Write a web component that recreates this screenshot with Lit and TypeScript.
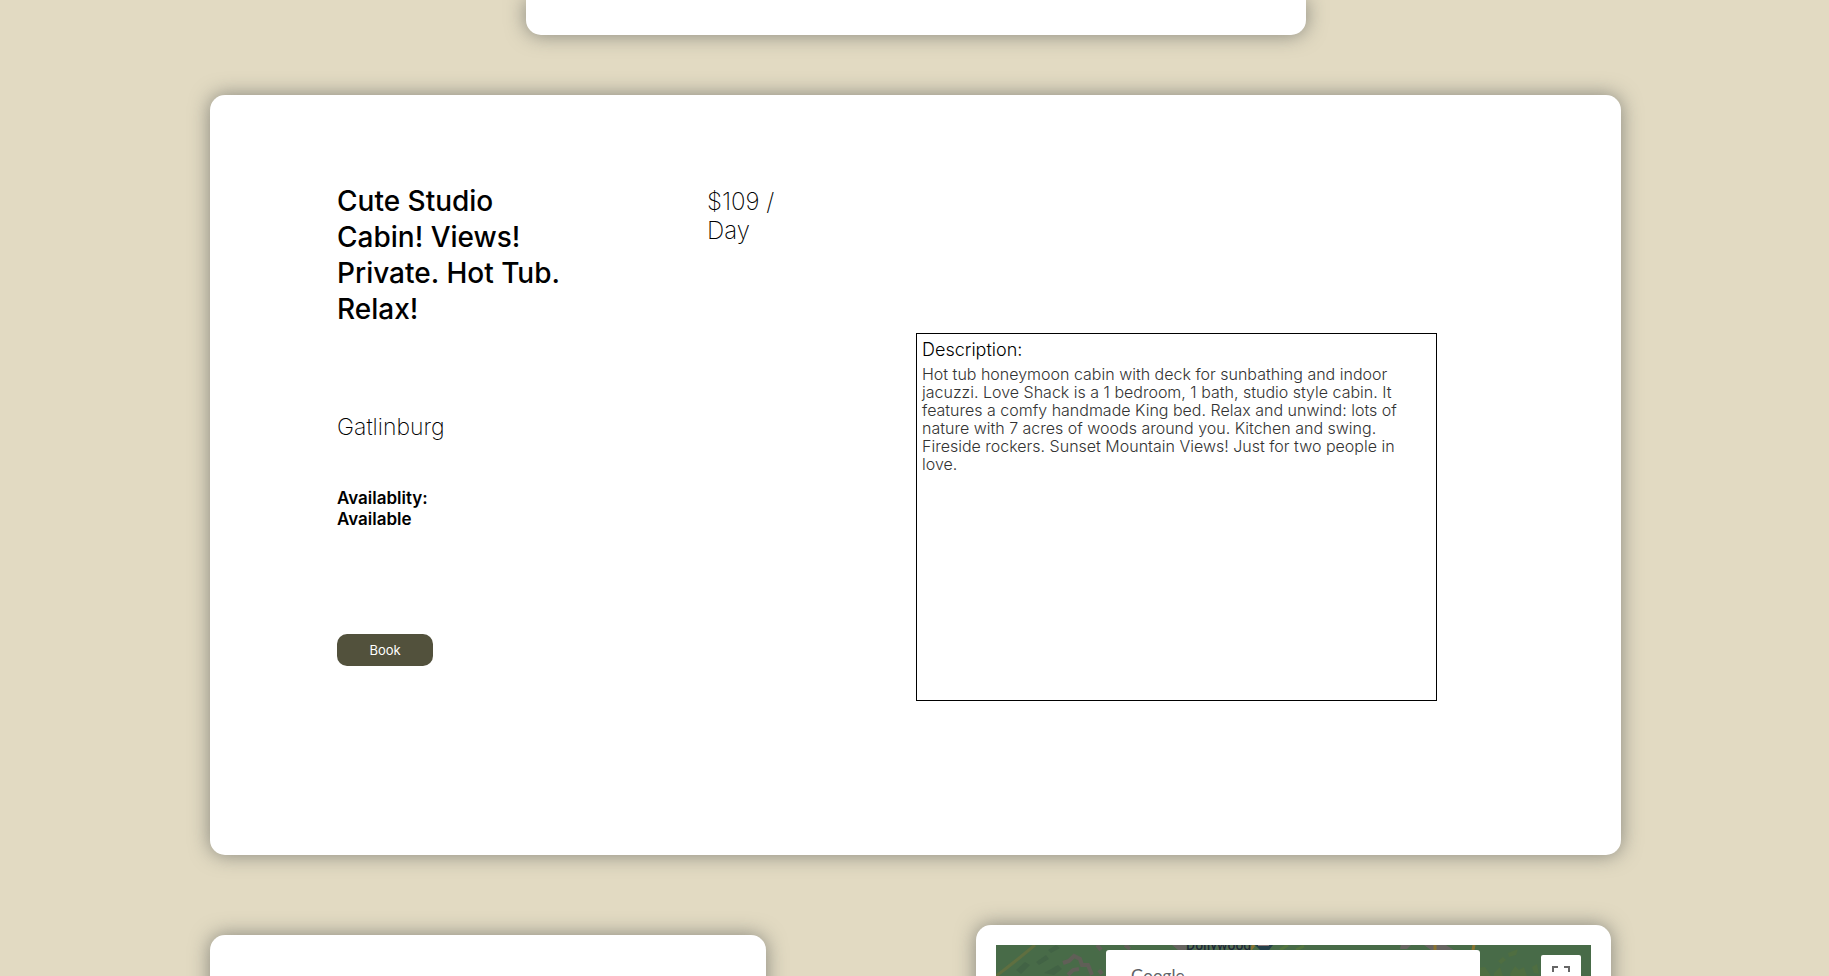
import { LitElement, html, css } from "lit";
import { customElement } from "lit/decorators.js";

@customElement("listing-card")
class ListingCard extends LitElement {
  static styles = css`
    :host { display: block; }
    .card {
      display: grid;
      grid-template-columns: 370fr 209fr 521fr;
      min-height: 760px;
      padding: 88px 184px 154px 127px;
      box-sizing: border-box;
      background: #fff;
      border-radius: 15px;
      box-shadow: 0 0 20px rgba(70, 75, 75, 0.6);
    }
    h1, h2, p { margin: 0; }
    .facts { display: flex; flex-direction: column; align-items: flex-start; }
    .title { font-size: 28px; line-height: 36px; font-weight: 500; }
    .price { font-size: 24px; line-height: 29px; font-weight: 200; padding-top: 4px; }
    .city { font-size: 23px; line-height: 28px; font-weight: 200; margin-top: 86px; }
    .availability { font-size: 17px; line-height: 21px; font-weight: 600; margin-top: 47px; }
    .book {
      width: 96px; height: 32px; margin-top: 104px; padding: 0;
      border: 0; border-radius: 10px; background: #52513c; color: #fff;
      font: 400 13px "Inter", sans-serif;
    }
    .description { border: 1px solid #000; margin-top: 150px; padding: 5px; box-sizing: border-box; }
    .label { font-size: 18px; line-height: 22px; font-weight: 300; }
    .body { font-size: 16px; line-height: 18px; font-weight: 300; margin-top: 4px; color: #333; }
  `;

  render() {
    return html`
      <article class="card">
        <div class="facts">
          <h1 class="title">Cute Studio<br />Cabin! Views!<br />Private. Hot Tub.<br />Relax!</h1>
          <p class="city">Gatlinburg</p>
          <p class="availability">Availablity:<br />Available</p>
          <button class="book" type="button">Book</button>
        </div>
        <p class="price">$109 /<br />Day</p>
        <section class="description">
          <h2 class="label">Description:</h2>
          <p class="body">
            Hot tub honeymoon cabin with deck for sunbathing and indoor<br />
            jacuzzi. Love Shack is a 1 bedroom, 1 bath, studio style cabin. It<br />
            features a comfy handmade King bed. Relax and unwind: lots of<br />
            nature with 7 acres of woods around you. Kitchen and swing.<br />
            Fireside rockers. Sunset Mountain Views! Just for two people in<br />
            love.
          </p>
        </section>
      </article>
    `;
  }
}

@customElement("location-map")
class LocationMap extends LitElement {
  static styles = css`
    :host { display: block; height: 100%; }
    .map { position: relative; height: 100%; overflow: hidden; background: #486b48; }
    .terrain { position: absolute; top: 0; left: 0; }
    .place {
      position: absolute; top: -9px; left: 190px;
      font: 500 14px/18px "Roboto", sans-serif; color: #1c2b33;
      text-shadow: 0 0 2px #777;
    }
    .dialog {
      position: absolute; top: 5px; left: 110px; right: 111px; height: 180px;
      padding: 14px 25px; box-sizing: border-box;
      background: #fff; border-radius: 3px;
      font: 400 17px/24px "Lato", sans-serif; color: #5f6368;
    }
    .fullscreen {
      position: absolute; top: 10px; right: 10px; width: 40px; height: 40px; padding: 11px;
      border: 0; border-radius: 2px; background: #fff;
    }
    .fullscreen svg { display: block; }
  `;

  render() {
    return html`
      <div class="map">
        <svg class="terrain" width="595" height="60" viewBox="0 0 595 60" aria-hidden="true">
          <path d="M8 25 22 14 39 0M0 31 12 22" fill="none" stroke="#5f6f40" stroke-width="3" />
          <path d="m20 25 9-8 5 3-9 9zM52 5l8-5 4 3-9 5zM40 17l10-7 3 4-10 6zM48 28l14-8 4 4-8 6z" fill="#426345" />
          <path d="m67 18 6-2 5-5 6 3 2 6 6 0 4 10M72 30l5-5 6-1M101 0l4 5M103 25l3 4M129 0l5 4" fill="none" stroke="#605f57" stroke-width="4" />
          <path d="M176 0h14v5h-8zM405 0h10l-4 4h-7zM428 0h22l8 5h-23z" fill="#666460" />
          <path d="M259 0h18l-4 5h-9z" fill="#243f49" />
          <path d="M262 0h11v1h-11z" fill="#8a7777" />
          <path d="M254 5l4-5M439 0v5M478 0l-1 5" fill="none" stroke="#8a7330" stroke-width="3" />
          <path d="M284 5l8-5M300 5l8-4" stroke="#53753f" stroke-width="3" />
          <path d="M477 23l12-1 6 9h-18zM498 28l6-6 3 9h-9zM502 16l5-4 3 3-5 4zM512 8l10-4-2 6-7 2zM514 29l5-8 4 4 5-3 3 9h-16zM536 22l5-3 2 10-5-1z" fill="#4f6e41" />
        </svg>
        <span class="place">Dollywood</span>
        <div class="dialog">Google</div>
        <button class="fullscreen" type="button" aria-label="Toggle fullscreen view">
          <svg width="18" height="18" viewBox="0 0 18 18" fill="none" stroke="#666" stroke-width="2">
            <path d="M1 6V1h5M12 1h5v5M17 12v5h-5M6 17H1v-5" />
          </svg>
        </button>
      </div>
    `;
  }
}

@customElement("app-root")
class AppRoot extends LitElement {
  static styles = css`
    :host {
      display: block; height: 100vh; overflow: hidden;
      background: #e2dac2; color: #000;
      font-family: "Inter", sans-serif;
    }
    .page { display: flex; flex-direction: column; padding: 0 208px 0 210px; }
    .panel { box-sizing: border-box; background: #fff; border-radius: 15px; box-shadow: 0 0 20px rgba(70, 75, 75, 0.6); }
    .gallery { width: 780px; height: 35px; align-self: center; border-radius: 0 0 15px 15px; margin-bottom: 60px; }
    .row { display: flex; justify-content: space-between; align-items: flex-start; padding: 70px 10px 0 0; }
    .calendar { width: 556px; height: 400px; margin-top: 10px; }
    .location { width: 635px; height: 400px; padding: 20px; }
  `;

  render() {
    return html`
      <main class="page">
        <div class="panel gallery"></div>
        <listing-card></listing-card>
        <div class="row">
          <div class="panel calendar"></div>
          <div class="panel location"><location-map></location-map></div>
        </div>
      </main>
    `;
  }
}
